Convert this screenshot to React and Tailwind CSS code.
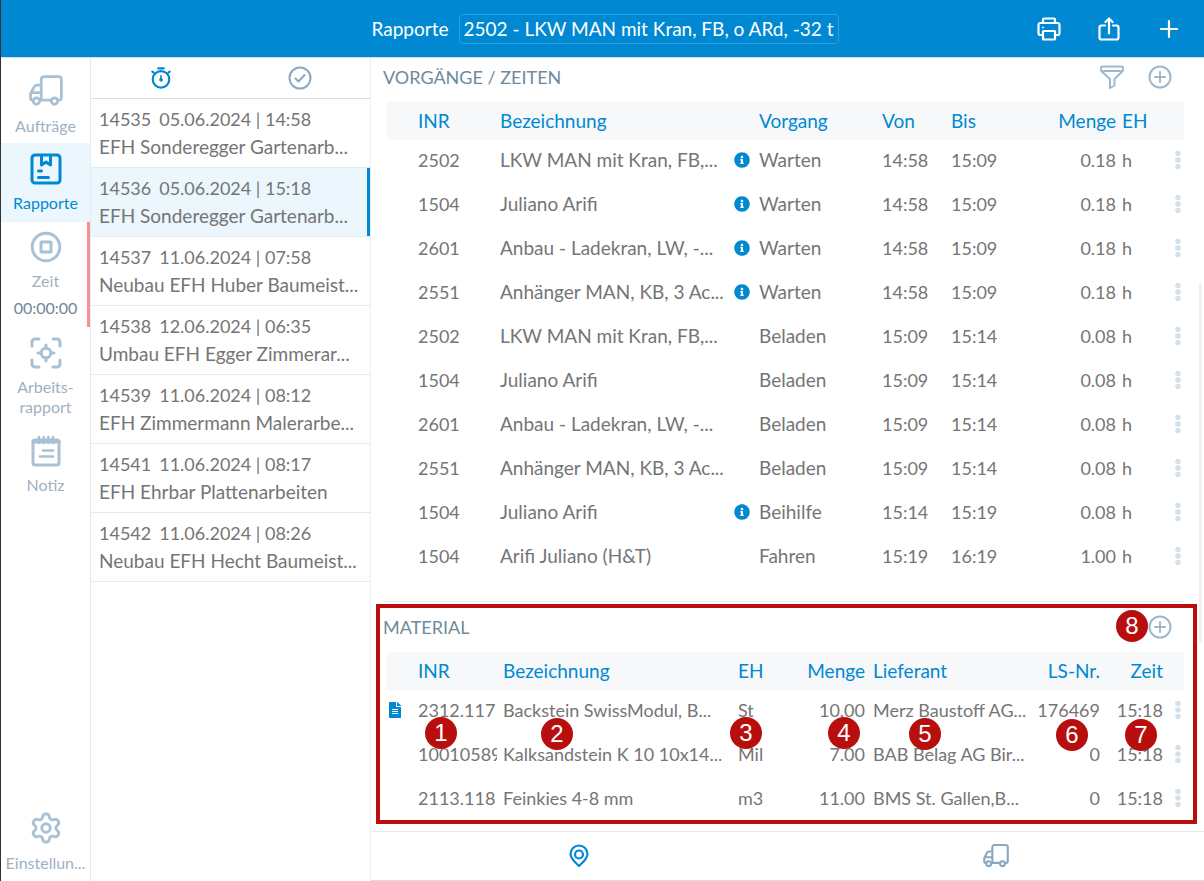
import React, { useState } from 'react';
import { Settings } from 'lucide-react';
import { FaInfoCircle, FaFileAlt } from 'react-icons/fa';

const reports = [
  { id: '14535', date: '05.06.2024 | 14:58', text: 'EFH Sonderegger Gartenarb...' },
  { id: '14536', date: '05.06.2024 | 15:18', text: 'EFH Sonderegger Gartenarb...' },
  { id: '14537', date: '11.06.2024 | 07:58', text: 'Neubau EFH Huber Baumeist...' },
  { id: '14538', date: '12.06.2024 | 06:35', text: 'Umbau EFH Egger Zimmerar...' },
  { id: '14539', date: '11.06.2024 | 08:12', text: 'EFH Zimmermann Malerarbe...' },
  { id: '14541', date: '11.06.2024 | 08:17', text: 'EFH Ehrbar Plattenarbeiten' },
  { id: '14542', date: '11.06.2024 | 08:26', text: 'Neubau EFH Hecht Baumeist...' },
];

const times = [
  { inr: '2502', name: 'LKW MAN mit Kran, FB,...', info: true, task: 'Warten', from: '14:58', to: '15:09', qty: '0.18' },
  { inr: '1504', name: 'Juliano Arifi', info: true, task: 'Warten', from: '14:58', to: '15:09', qty: '0.18' },
  { inr: '2601', name: 'Anbau - Ladekran, LW, -...', info: true, task: 'Warten', from: '14:58', to: '15:09', qty: '0.18' },
  { inr: '2551', name: 'Anhänger MAN, KB, 3 Ac...', info: true, task: 'Warten', from: '14:58', to: '15:09', qty: '0.18' },
  { inr: '2502', name: 'LKW MAN mit Kran, FB,...', info: false, task: 'Beladen', from: '15:09', to: '15:14', qty: '0.08' },
  { inr: '1504', name: 'Juliano Arifi', info: false, task: 'Beladen', from: '15:09', to: '15:14', qty: '0.08' },
  { inr: '2601', name: 'Anbau - Ladekran, LW, -...', info: false, task: 'Beladen', from: '15:09', to: '15:14', qty: '0.08' },
  { inr: '2551', name: 'Anhänger MAN, KB, 3 Ac...', info: false, task: 'Beladen', from: '15:09', to: '15:14', qty: '0.08' },
  { inr: '1504', name: 'Juliano Arifi', info: true, task: 'Beihilfe', from: '15:14', to: '15:19', qty: '0.08' },
  { inr: '1504', name: 'Arifi Juliano (H&T)', info: false, task: 'Fahren', from: '15:19', to: '16:19', qty: '1.00' },
];

const materials = [
  { inr: '2312.117', name: 'Backstein SwissModul, B...', unit: 'St', qty: '10.00', supplier: 'Merz Baustoff AG...', note: '176469', time: '15:18', doc: true },
  { inr: '10010589', name: 'Kalksandstein K 10 10x14...', unit: 'Mil', qty: '7.00', supplier: 'BAB Belag AG Bir...', note: '0', time: '15:18', doc: false },
  { inr: '2113.118', name: 'Feinkies 4-8 mm', unit: 'm3', qty: '11.00', supplier: 'BMS St. Gallen,B...', note: '0', time: '15:18', doc: false },
];

const markers = [
  { n: 1, pos: 'left-[54px] top-[116px]' },
  { n: 2, pos: 'left-[170px] top-[117px]' },
  { n: 3, pos: 'right-[442px] top-[116px]' },
  { n: 4, pos: 'right-[344px] top-[116px]' },
  { n: 5, pos: 'right-[263px] top-[117px]' },
  { n: 6, pos: 'right-[116px] top-[118px]' },
  { n: 7, pos: 'right-[47px] top-[118px]' },
  { n: 8, pos: 'right-[56px] top-[9px]' },
];

const Icon = ({ className, width = 2, box = 32, children }) => (
  <svg
    className={className}
    viewBox={`0 0 ${box} ${box}`}
    fill="none"
    stroke="currentColor"
    strokeWidth={width}
    strokeLinecap="round"
    strokeLinejoin="round"
    aria-hidden="true"
  >
    {children}
  </svg>
);

const TruckIcon = ({ className }) => (
  <Icon className={className} width={2.6}>
    <path d="M11.500 24V5A2.500 2.500 0 0 1 14 2.500h14A2.500 2.500 0 0 1 30.500 5v17a2.500 2.500 0 0 1-2.500 2.500M20.500 24.500h-10" />
    <path d="M11 10.500H7.500a3 3 0 0 0-2.700 1.700L2 17.500a3 3 0 0 0-.5 1.500v4a1.500 1.500 0 0 0 1.500 1.500M2 17.500h9" />
    <circle cx="7" cy="25.500" r="3" />
    <circle cx="24" cy="25.500" r="3" />
  </Icon>
);

const ReportIcon = ({ className }) => (
  <Icon className={className} width={3}>
    <rect x="2" y="2" width="28" height="28" rx="3" />
    <path d="M11.500 2.500V12l4.500-3 4.500 3V2.500" />
    <path d="M8.500 18h3M8.500 24.500h10" />
  </Icon>
);

const StopIcon = ({ className }) => (
  <Icon className={className} width={3}>
    <circle cx="16" cy="16" r="13.800" />
    <rect x="11" y="11" width="10" height="10" rx="0.500" />
  </Icon>
);

const TargetIcon = ({ className }) => (
  <Icon className={className} width={3}>
    <path d="M2 9V5a3 3 0 0 1 3-3h4M23 2h4a3 3 0 0 1 3 3v4M30 23v4a3 3 0 0 1-3 3h-4M9 30H5a3 3 0 0 1-3-3v-4" />
    <circle cx="16" cy="16" r="4.800" />
    <path d="M16 8v3M16 21v3M8 16h3M21 16h3" />
  </Icon>
);

const NoteIcon = ({ className }) => (
  <Icon className={className} width={3}>
    <rect x="3" y="5" width="26" height="25" rx="2" />
    <path d="M3.500 6.500h25" strokeWidth="4" />
    <path d="M9 2v6M13.700 2v6M18.300 2v6M23 2v6" strokeWidth="2.600" />
    <path d="M13 15.500h10M10 21.500h13" strokeWidth="2.600" />
  </Icon>
);

const StopwatchIcon = ({ className }) => (
  <Icon className={className} width={2.4} box={24}>
    <circle cx="12" cy="13.500" r="9" />
    <path d="M9 1.500h6M2.500 5l1.500 1.200M21.500 5L20 6.200" />
    <path d="M12 9.500v4" strokeWidth="1.800" />
    <circle cx="12" cy="14" r="1.500" fill="currentColor" strokeWidth="1" />
  </Icon>
);

const CheckIcon = ({ className }) => (
  <Icon className={className} width={2} box={24}>
    <circle cx="12" cy="12" r="10.500" />
    <path d="M7.500 12.500l3 3 6-6.500" />
  </Icon>
);

const PrintIcon = ({ className }) => (
  <Icon className={className} width={2.2} box={24}>
    <path d="M6 6V2.500a1 1 0 0 1 1-1h10a1 1 0 0 1 1 1V6" />
    <path d="M6 18H3.500a2 2 0 0 1-2-2V8a2 2 0 0 1 2-2h17a2 2 0 0 1 2 2v8a2 2 0 0 1-2 2H18" />
    <rect x="6" y="14" width="12" height="8.500" rx="0.500" />
    <circle cx="6" cy="10.500" r="0.600" fill="currentColor" strokeWidth="1" />
  </Icon>
);

const ShareIcon = ({ className }) => (
  <Icon className={className} width={2.2} box={24}>
    <path d="M8 8.500H4.500a2 2 0 0 0-2 2v10a2 2 0 0 0 2 2h15a2 2 0 0 0 2-2v-10a2 2 0 0 0-2-2H16" />
    <path d="M12 16.500V1.500M8.500 5L12 1.500 15.500 5" />
  </Icon>
);

const FilterIcon = ({ className }) => (
  <Icon className={className} width={2} box={24}>
    <path d="M2.500 1.500h19a1.500 1.500 0 0 1 1.500 1.500v1.500a3 3 0 0 1-.8 2L14.500 14v6.500l-4.500 2.500v-9L1.800 6.500a3 3 0 0 1-.8-2V3a1.500 1.500 0 0 1 1.500-1.500z" />
    <path d="M1.500 6h21" />
  </Icon>
);

const AddIcon = ({ className }) => (
  <Icon className={className} width={2} box={24}>
    <circle cx="12" cy="12" r="10.500" />
    <path d="M12 7v10M7 12h10" />
  </Icon>
);

const PlusIcon = ({ className }) => (
  <Icon className={className} width={2.2} box={24}>
    <path d="M12 4v16M4 12h16" />
  </Icon>
);

const PinIcon = ({ className }) => (
  <Icon className={className} width={2.2} box={24}>
    <path d="M12 22C8.500 18.500 3.500 15 3.500 10a8.500 8.500 0 0 1 17 0c0 5-5 8.500-8.500 12z" />
    <circle cx="12" cy="10.500" r="4" />
  </Icon>
);

const RowMenu = () => (
  <button type="button" aria-label="Mehr" className="flex h-6 w-3 items-center justify-center text-[#d3e1ec]">
    <svg viewBox="0 0 6 20" className="h-5 w-[6px]" fill="currentColor" aria-hidden="true">
      <circle cx="3" cy="3.500" r="2.800" />
      <circle cx="3" cy="10" r="2.800" />
      <circle cx="3" cy="16.500" r="2.800" />
    </svg>
  </button>
);

const NavItem = ({ icon, label, active, extra, className = '' }) => (
  <a
    href="#"
    className={`flex flex-col items-center text-center text-[16px] leading-5 ${active ? 'bg-[#ebf7fd] text-[#0089d2]' : 'text-[#9fb1bf]'} ${className}`}
  >
    {icon}
    <span className="mt-2">{label}</span>
    {extra}
  </a>
);

const head = 'p-0 font-normal';
const cell = 'overflow-hidden whitespace-nowrap p-0 pt-2 pb-3 align-top';

const App = () => {
  const [selected, setSelected] = useState('14536');

  return (
    <div className="flex min-h-screen flex-col border-l border-[#333] bg-white font-['Lato','Open_Sans',sans-serif] text-[18px] leading-6 text-[#757575]">
      <header className="flex h-[57px] items-center bg-[#0089d2] pl-7 text-[19px] text-white">
        <div className="flex-1" />
        <span>Rapporte</span>
        <button type="button" className="ml-[10px] h-[30px] w-[380px] rounded border border-[#2d9fdd] whitespace-nowrap">
          2502 - LKW MAN mit Kran, FB, o ARd, -32 t
        </button>
        <div className="flex flex-1 justify-end gap-9 pr-[23px]">
          <button type="button" aria-label="Drucken"><PrintIcon className="size-6" /></button>
          <button type="button" aria-label="Teilen"><ShareIcon className="size-6" /></button>
          <button type="button" aria-label="Neu"><PlusIcon className="size-6" /></button>
        </div>
      </header>

      <div className="flex flex-1 border-t border-[#d9dde0]">
        <nav className="flex w-[90px] shrink-0 flex-col border-r border-[#e0ecf5]">
          <NavItem className="h-[85px] pt-4" icon={<TruckIcon className="size-[34px] text-[#a9c1d4]" />} label="Aufträge" />
          <NavItem className="h-[79px] pt-[10px]" active icon={<ReportIcon className="size-8" />} label="Rapporte" />
          <NavItem
            className="h-[105px] border-r-3 border-[#fa8f8f] pt-[9px] pl-[3px]"
            icon={<StopIcon className="size-8 text-[#a9c1d4]" />}
            label="Zeit"
            extra={<span className="mt-[7px] text-[#6f8796]">00:00:00</span>}
          />
          <NavItem
            className="h-[99px] pt-[10px]"
            icon={<TargetIcon className="size-8 text-[#a9c1d4]" />}
            label={<>Arbeits-<br />rapport</>}
          />
          <NavItem className="pt-[9px]" icon={<NoteIcon className="size-8 text-[#a9c1d4]" />} label="Notiz" />
          <NavItem
            className="mt-auto pb-2"
            icon={<Settings className="size-[34px] text-[#a9c1d4]" strokeWidth={2} />}
            label="Einstellun..."
          />
        </nav>

        <aside className="w-[280px] shrink-0 border-r border-[#e8eff5]">
          <div className="flex h-[41px] items-center border-b border-[#dcdcdc]">
            <button type="button" aria-label="Offen" className="flex flex-1 justify-center text-[#0089d2]">
              <StopwatchIcon className="size-[22px]" />
            </button>
            <button type="button" aria-label="Erledigt" className="flex flex-1 justify-center text-[#8aa9c1]">
              <CheckIcon className="size-6" />
            </button>
          </div>
          <ul>
            {reports.map((report) => (
              <li key={report.id} className="border-b border-[#e0ecf5]">
                <button
                  type="button"
                  onClick={() => setSelected(report.id)}
                  className={`block h-[68px] w-full overflow-hidden border-r-3 pl-2 text-left whitespace-nowrap ${selected === report.id ? 'border-[#0089d2] bg-[#ebf7fd]' : 'border-transparent'}`}
                >
                  <span className="block leading-7">
                    {report.id}
                    <span className="ml-2">{report.date}</span>
                  </span>
                  <span className="block text-[19px] leading-7">{report.text}</span>
                </button>
              </li>
            ))}
          </ul>
        </aside>

        <main className="relative flex min-w-0 flex-1 flex-col">
          <div className="absolute top-[225px] right-[2px] h-[360px] w-[3px] rounded-full bg-[#f1f1f1]" />

          <section className="pr-5 pl-4">
            <div className="-ml-1 flex h-11 items-end justify-between pb-[13px] text-[#6f8a9a]">
              <h2>VORGÄNGE / ZEITEN</h2>
              <div className="flex gap-6 pr-3 text-[#9fb8cc]">
                <button type="button" aria-label="Filtern"><FilterIcon className="size-6" /></button>
                <button type="button" aria-label="Vorgang hinzufügen"><AddIcon className="size-6" /></button>
              </div>
            </div>
            <table className="w-full table-fixed text-left">
              <thead>
                <tr className="h-[38px] bg-[#f6f8fa] text-[19px] text-[#0089d2]">
                  <th className={`${head} w-[31px]`} />
                  <th className={`${head} w-[82px]`}>INR</th>
                  <th className={head}>Bezeichnung</th>
                  <th className={`${head} w-[25px]`} />
                  <th className={`${head} w-[123px]`}>Vorgang</th>
                  <th className={`${head} w-[69px]`}>Von</th>
                  <th className={`${head} w-[79px]`}>Bis</th>
                  <th className={`${head} w-[86px] text-right`}>Menge</th>
                  <th className={`${head} w-[56px] pl-[6px]`}>EH</th>
                  <th className={`${head} w-3`} />
                </tr>
              </thead>
              <tbody>
                {times.map((row, i) => (
                  <tr key={i}>
                    <td className={cell} />
                    <td className={cell}>{row.inr}</td>
                    <td className={`${cell} text-[19px]`}>{row.name}</td>
                    <td className={cell}>
                      {row.info && <FaInfoCircle className="mt-1 size-4 text-[#0089d2]" />}
                    </td>
                    <td className={`${cell} text-[19px]`}>{row.task}</td>
                    <td className={cell}>{row.from}</td>
                    <td className={cell}>{row.to}</td>
                    <td className={`${cell} text-right`}>{row.qty}</td>
                    <td className={`${cell} pl-[6px]`}>h</td>
                    <td className={cell}><RowMenu /></td>
                  </tr>
                ))}
              </tbody>
            </table>
          </section>

          <section className="relative mt-[21px] pr-5 pl-4 pb-2">
            <div className="-ml-1 flex h-[51px] items-end justify-between border-t border-[#e3ebf0] pb-[13px] text-[#6f8a9a]">
              <h2>MATERIAL</h2>
              <button type="button" aria-label="Material hinzufügen" className="mr-3 text-[#9fb8cc]">
                <AddIcon className="size-6" />
              </button>
            </div>
            <table className="w-full table-fixed text-left">
              <thead>
                <tr className="h-[38px] bg-[#f6f8fa] text-[19px] text-[#0089d2]">
                  <th className={`${head} w-[31px]`} />
                  <th className={`${head} w-[79px]`}>INR</th>
                  <th className={`${head} pl-[6px]`}>Bezeichnung</th>
                  <th className={`${head} w-[52px]`}>EH</th>
                  <th className={`${head} w-[75px] text-right`}>Menge</th>
                  <th className={`${head} w-[168px] pl-2`}>Lieferant</th>
                  <th className={`${head} w-[67px] text-right`}>LS-Nr.</th>
                  <th className={`${head} w-[63px] text-right`}>Zeit</th>
                  <th className={`${head} w-[21px]`} />
                </tr>
              </thead>
              <tbody>
                {materials.map((row) => (
                  <tr key={row.inr}>
                    <td className={cell}>
                      {row.doc && <FaFileAlt className="mt-1 ml-[2px] h-4 w-3 text-[#0089d2]" />}
                    </td>
                    <td className={cell}>{row.inr}</td>
                    <td className={`${cell} pl-[6px]`}>{row.name}</td>
                    <td className={cell}>{row.unit}</td>
                    <td className={`${cell} text-right`}>{row.qty}</td>
                    <td className={`${cell} pl-2`}>{row.supplier}</td>
                    <td className={`${cell} text-right`}>{row.note}</td>
                    <td className={`${cell} text-right`}>{row.time}</td>
                    <td className={`${cell} pl-[9px]`}><RowMenu /></td>
                  </tr>
                ))}
              </tbody>
            </table>

            <div className="pointer-events-none absolute top-[3px] right-[7px] bottom-[6px] left-[5px] border-4 border-[#b90e0e]" />
            {markers.map((marker) => (
              <span
                key={marker.n}
                className={`absolute flex size-8 items-center justify-center rounded-full bg-[#b90e0e] font-['Liberation_Sans',sans-serif] text-[24px] text-white ${marker.pos}`}
              >
                {marker.n}
              </span>
            ))}
          </section>

          <footer className="mt-auto flex h-[50px] items-center border-t border-b border-t-[#e3ebf0] border-b-[#dcdcdc]">
            <button type="button" aria-label="Standort" className="flex flex-1 justify-center text-[#0089d2]">
              <PinIcon className="size-6" />
            </button>
            <button type="button" aria-label="Fahrzeug" className="flex flex-1 justify-center text-[#8aa9c1]">
              <TruckIcon className="size-[26px]" />
            </button>
          </footer>
        </main>
      </div>
    </div>
  );
};

export default App;
